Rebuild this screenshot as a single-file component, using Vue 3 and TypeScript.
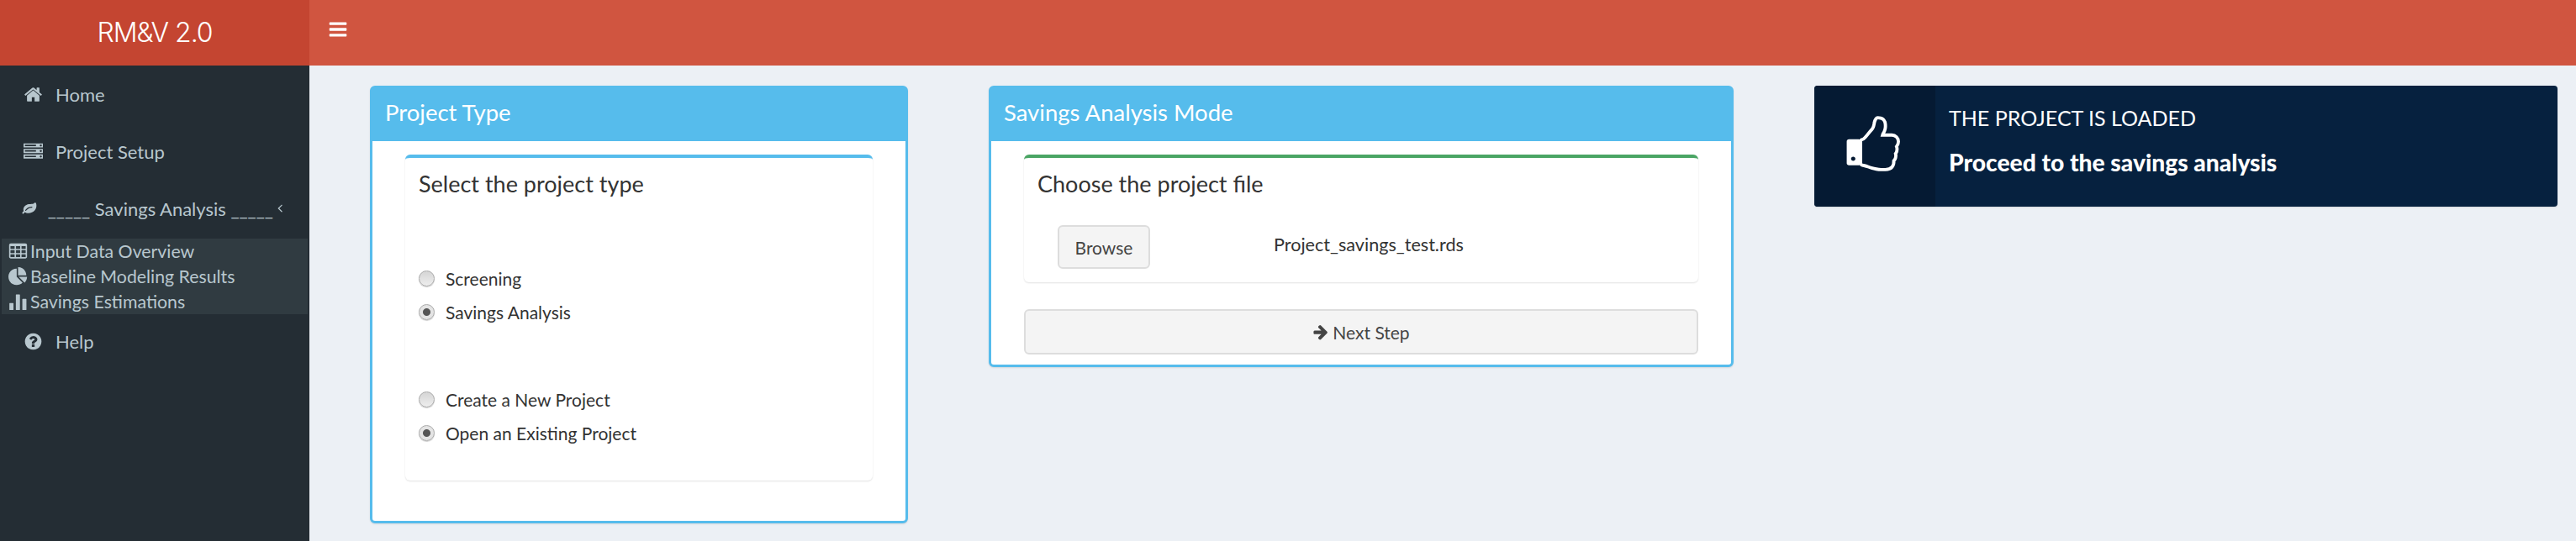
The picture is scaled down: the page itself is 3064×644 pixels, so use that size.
<script setup lang="ts">
const paths: Record<string, string> = {
  bars: 'M1664 1344v128q0 26-19 45t-45 19h-1408q-26 0-45-19t-19-45v-128q0-26 19-45t45-19h1408q26 0 45 19t19 45zm0-512v128q0 26-19 45t-45 19h-1408q-26 0-45-19t-19-45v-128q0-26 19-45t45-19h1408q26 0 45 19t19 45zm0-512v128q0 26-19 45t-45 19h-1408q-26 0-45-19t-19-45v-128q0-26 19-45t45-19h1408q26 0 45 19t19 45z',
  home: 'M1472 992v480q0 26-19 45t-45 19h-384v-384h-256v384h-384q-26 0-45-19t-19-45v-480q0-1 .5-3t.5-3l575-474 575 474q1 2 1 6zm223-69l-62 74q-8 9-21 11h-3q-13 0-21-7l-692-577-692 577q-12 8-24 7-13-2-21-11l-62-74q-8-10-7-23.5t11-21.5l719-599q32-26 76-26t76 26l244 204v-195q0-14 9-23t23-9h192q14 0 23 9t9 23v408l219 182q10 8 11 21.5t-7 23.5z',
  server: 'M128 1408h1024v-128h-1024v128zm0-512h1024v-128h-1024v128zm1568 448q0-40-28-68t-68-28-68 28-28 68 28 68 68 28 68-28 28-68zm-1568-960h1024v-128h-1024v128zm1568 448q0-40-28-68t-68-28-68 28-28 68 28 68 68 28 68-28 28-68zm0-512q0-40-28-68t-68-28-68 28-28 68 28 68 68 28 68-28 28-68zm96 832v384h-1792v-384h1792zm0-512v384h-1792v-384h1792zm0-512v384h-1792v-384h1792z',
  leaf: 'M1280 704q0-26-19-45t-45-19q-172 0-318 49.5t-259.5 134-235.5 219.5q-19 21-19 45 0 26 19 45t45 19q24 0 45-19 27-24 74-71t67-66q137-124 268.5-176t313.5-52q26 0 45-19t19-45zm512-198q0 95-20 193-46 224-184.5 383t-357.5 268q-214 108-438 108-148 0-286-47-15-5-88-42t-96-37q-16 0-39.5 32t-45 70-52.5 70-60 32q-30 0-51-11t-31-24-27-42q-2-4-6-11t-5.5-10-3-9.5-1.5-13.5q0-35 31-73.5t68-65.5 68-56 31-48q0-4-14-38t-16-44q-9-51-9-104 0-115 43.5-220t119-184.5 170.5-139 204-95.5q55-18 145-25.5t179.5-9 178.5-6 163.5-24 113.5-56.5l29.5-29.5 29.5-28 27-20 36.5-16 43.5-4.5q39 0 70.5 46t47.5 112 24 124 8 96z',
  angle: 'M1203 544q0 13-10 23l-393 393 393 393q10 10 10 23t-10 23l-50 50q-10 10-23 10t-23-10l-466-466q-10-10-10-23t10-23l466-466q10-10 23-10t23 10l50 50q10 10 10 23z',
  help: 'M1024 1376v-192q0-14-9-23t-23-9h-192q-14 0-23 9t-9 23v192q0 14 9 23t23 9h192q14 0 23-9t9-23zm256-672q0-88-55.5-163t-138.5-116-170-41q-243 0-371 213-15 24 8 42l132 100q7 6 19 6 16 0 25-12 53-68 86-92 34-24 86-24 48 0 85.5 26t37.5 59q0 38-20 61t-68 45q-63 28-115.5 86.5t-52.5 125.5v36q0 14 9 23t23 9h192q14 0 23-9t9-23q0-19 21.5-49.5t54.5-49.5q32-18 49-28.5t46-35 44.5-48 28-60.5 12.5-81zm384 192q0 209-103 385.5t-279.5 279.5-385.5 103-385.5-103-279.5-279.5-103-385.5 103-385.5 279.5-279.5 385.5-103 385.5 103 279.5 279.5 103 385.5z',
  table: 'M576 1376v-192q0-14-9-23t-23-9h-320q-14 0-23 9t-9 23v192q0 14 9 23t23 9h320q14 0 23-9t9-23zm0-384v-192q0-14-9-23t-23-9h-320q-14 0-23 9t-9 23v192q0 14 9 23t23 9h320q14 0 23-9t9-23zm512 384v-192q0-14-9-23t-23-9h-320q-14 0-23 9t-9 23v192q0 14 9 23t23 9h320q14 0 23-9t9-23zm-512-768v-192q0-14-9-23t-23-9h-320q-14 0-23 9t-9 23v192q0 14 9 23t23 9h320q14 0 23-9t9-23zm512 384v-192q0-14-9-23t-23-9h-320q-14 0-23 9t-9 23v192q0 14 9 23t23 9h320q14 0 23-9t9-23zm512 384v-192q0-14-9-23t-23-9h-320q-14 0-23 9t-9 23v192q0 14 9 23t23 9h320q14 0 23-9t9-23zm-512-768v-192q0-14-9-23t-23-9h-320q-14 0-23 9t-9 23v192q0 14 9 23t23 9h320q14 0 23-9t9-23zm512 384v-192q0-14-9-23t-23-9h-320q-14 0-23 9t-9 23v192q0 14 9 23t23 9h320q14 0 23-9t9-23zm0-384v-192q0-14-9-23t-23-9h-320q-14 0-23 9t-9 23v192q0 14 9 23t23 9h320q14 0 23-9t9-23zm128-320v1088q0 66-47 113t-113 47h-1344q-66 0-113-47t-47-113v-1088q0-66 47-113t113-47h1344q66 0 113 47t47 113z',
  pie: 'M768 890l546 546q-106 108-247.5 168t-298.5 60q-209 0-385.5-103t-279.5-279.5-103-385.5 103-385.5 279.5-279.5 385.5-103v762zm187 6h773q0 157-60 298.5t-168 247.5zm709-128h-768v-768q209 0 385.5 103t279.5 279.5 103 385.5z',
  stats: 'M130 1000h300q40 0 40 40v560q0 40-40 40h-300q-40 0-40-40v-560q0-40 40-40zm600-800h300q40 0 40 40v1360q0 40-40 40h-300q-40 0-40-40v-1360q0-40 40-40zm600 400h300q40 0 40 40v960q0 40-40 40h-300q-40 0-40-40v-960q0-40 40-40z',
  arrow: 'M1600 960q0 54-37 91l-651 651q-39 37-91 37-51 0-90-37l-75-75q-38-38-38-91t38-91l293-293h-704q-52 0-84.5-37.5t-32.5-90.5v-128q0-53 32.5-90.5t84.5-37.5h704l-293-294q-38-36-38-90t38-90l75-75q38-38 90-38 53 0 91 38l651 651q37 35 37 90z',
}

const mainMenu = [
  { label: 'Home', icon: 'home' },
  { label: 'Project Setup', icon: 'server' },
]

const subMenu = [
  { label: 'Input Data Overview', icon: 'table' },
  { label: 'Baseline Modeling Results', icon: 'pie' },
  { label: 'Savings Estimations', icon: 'stats' },
]

const typeOptions = [
  { label: 'Screening', checked: false },
  { label: 'Savings Analysis', checked: true },
]

const projectOptions = [
  { label: 'Create a New Project', checked: false },
  { label: 'Open an Existing Project', checked: true },
]
</script>

<template>
  <div class="page">
    <aside class="sidebar">
      <div class="logo">RM&amp;V 2.0</div>
      <a v-for="item in mainMenu" :key="item.label" class="menu-item">
        <svg class="menu-icon" viewBox="0 0 1792 1792"><path :d="paths[item.icon]" fill-rule="evenodd" /></svg>
        <span>{{ item.label }}</span>
      </a>
      <a class="menu-item">
        <svg class="menu-icon leaf" viewBox="0 0 1792 1792"><path :d="paths.leaf" fill-rule="evenodd" /></svg>
        <span class="savings-label">_____ Savings Analysis _____</span>
        <svg class="angle" viewBox="0 0 1792 1792"><path :d="paths.angle" /></svg>
      </a>
      <div class="tree">
        <a v-for="item in subMenu" :key="item.label" class="tree-item">
          <svg class="tree-icon" viewBox="0 0 1792 1792"><path :d="paths[item.icon]" fill-rule="evenodd" /></svg>
          <span>{{ item.label }}</span>
        </a>
      </div>
      <a class="menu-item help">
        <svg class="menu-icon" viewBox="0 0 1792 1792"><path :d="paths.help" fill-rule="evenodd" /></svg>
        <span>Help</span>
      </a>
    </aside>

    <div class="main">
      <header class="navbar">
        <svg class="toggle" viewBox="0 0 1792 1792"><path :d="paths.bars" /></svg>
      </header>

      <section class="content">
        <div class="box project-box">
          <h3 class="box-header">Project Type</h3>
          <div class="box-body">
            <div class="inner type-inner">
              <h4 class="inner-title">Select the project type</h4>
              <div class="radio-group first-group">
                <label v-for="opt in typeOptions" :key="opt.label" class="radio">
                  <input type="radio" name="type" :checked="opt.checked" />
                  <span>{{ opt.label }}</span>
                </label>
              </div>
              <div class="radio-group second-group">
                <label v-for="opt in projectOptions" :key="opt.label" class="radio">
                  <input type="radio" name="project" :checked="opt.checked" />
                  <span>{{ opt.label }}</span>
                </label>
              </div>
            </div>
          </div>
        </div>

        <div class="box mode-box">
          <h3 class="box-header">Savings Analysis Mode</h3>
          <div class="box-body">
            <div class="inner file-inner">
              <h4 class="inner-title">Choose the project file</h4>
              <div class="file-row">
                <button class="btn browse">Browse</button>
                <span class="file-name">Project_savings_test.rds</span>
              </div>
            </div>
            <button class="btn next">
              <svg class="next-icon" viewBox="0 0 1792 1792"><path :d="paths.arrow" /></svg>
              Next Step
            </button>
          </div>
        </div>

        <div class="info-box">
          <span class="info-icon">
            <svg class="thumb" viewBox="0 0 1792 1792">
              <path fill="#fff" fill-rule="evenodd" d="M320 1344q0-26-19-45t-45-19q-27 0-45.5 19t-18.5 45q0 27 18.5 45.5t45.5 18.5q26 0 45-18.5t19-45.5zm160-512v640q0 26-19 45t-45 19h-288q-26 0-45-19t-19-45v-640q0-26 19-45t45-19h288q26 0 45 19t19 45z" />
              <rect x="400" y="780" width="120" height="740" fill="#fff" />
              <path transform="translate(-70 0)" fill="none" stroke="#fff" stroke-width="96" d="M1664 832q0 86-55 149 15 44 15 76 3 76-43 137 17 56 0 117-15 57-54 94 9 112-49 181-64 76-197 78h-129q-66 0-144-15.5t-121.5-29-120.5-39.5q-123-43-158-44-26-1-45-19.5t-19-44.5v-641q0-25 18-43.5t43-20.5q24-2 76-59t101-121q68-87 101-120 18-18 31-48t17.5-48.5 13.5-60.5q7-39 12.5-61t19.5-52 34-50q19-19 45-19 46 0 82.5 10.5t60 26 40 40.5 24 45 12 50 5 45 .5 39q0 38-9.5 76t-19 60-27.5 56q-3 6-10 18t-11 22-8 24h277q78 0 135 57t57 135z" />
            </svg>
          </span>
          <div class="info-text">
            <span class="info-title">THE PROJECT IS LOADED</span>
            <span class="info-value">Proceed to the savings analysis</span>
          </div>
        </div>
      </section>
    </div>
  </div>
</template>

<style>
html,
body {
  margin: 0;
  overflow: hidden;
  background: #ecf0f5;
}
</style>

<style scoped>
.page {
  display: flex;
  height: 644px;
  font-family: Lato, "Noto Sans", sans-serif;
  color: #333;
}

.sidebar {
  width: 368px;
  flex-shrink: 0;
  background: #242d34;
  color: #b8c7ce;
}

.logo {
  height: 78px;
  background: #c44531;
  color: #fff;
  font-family: Inter, Roboto, sans-serif;
  font-weight: 300;
  font-size: 32px;
  letter-spacing: -1px;
  line-height: 78px;
  text-align: center;
}

.menu-item {
  display: flex;
  align-items: center;
  height: 68px;
  padding-left: 28px;
  font-size: 22px;
}

.menu-item.help {
  height: 64px;
}

.menu-icon {
  width: 23px;
  height: 23px;
  margin-right: 15px;
  fill: #b8c7ce;
}

.leaf {
  transform: scale(1.25);
}

.savings-label {
  white-space: pre;
}

.angle {
  width: 27px;
  height: 27px;
  margin: 0 27px 2px auto;
  fill: #b8c7ce;
}

.tree {
  margin: 2px 2px 0;
  height: 90px;
  background: #303b41;
}

.tree-item {
  display: flex;
  align-items: center;
  gap: 3px;
  height: 30px;
  padding-left: 8px;
  font-size: 21.3px;
}

.tree-icon {
  width: 23px;
  height: 23px;
  fill: #b8c7ce;
}

.main {
  flex: 1;
  display: flex;
  flex-direction: column;
  min-width: 0;
}

.navbar {
  display: flex;
  align-items: center;
  height: 78px;
  padding: 0 0 8px 22px;
  box-sizing: border-box;
  background: #d05540;
}

.toggle {
  width: 24px;
  height: 24px;
  fill: #fff;
}

.content {
  display: grid;
  grid-template-columns: 640px 886px 884px;
  column-gap: 96px;
  align-items: start;
  padding: 24px 0 0 72px;
}

.box {
  box-sizing: border-box;
  border: 3px solid #56bcec;
  border-radius: 6px;
  background: #fff;
  box-shadow: 0 1px 2px rgba(0, 0, 0, 0.1);
}

.project-box {
  height: 521px;
}

.mode-box {
  height: 335px;
}

.box-header {
  box-sizing: border-box;
  height: 63px;
  margin: 0;
  padding-left: 15px;
  background: #56bcec;
  color: #fff;
  font-size: 27.5px;
  font-weight: 400;
  line-height: 58px;
}

.box-body {
  padding: 16px 39px 0;
}

.inner {
  box-sizing: border-box;
  border-top: 4px solid #56bcec;
  border-radius: 6px;
  background: #fff;
  box-shadow: 0 1px 2px rgba(0, 0, 0, 0.12);
  padding: 0 16px;
}

.type-inner {
  height: 388px;
}

.file-inner {
  height: 152px;
  border-top-color: #4aa564;
}

.inner-title {
  margin: 0;
  padding-top: 13px;
  font-size: 27px;
  font-weight: 400;
  line-height: 36px;
}

.radio-group {
  display: flex;
  flex-direction: column;
  gap: 18px;
}

.first-group {
  padding-top: 83px;
}

.second-group {
  padding-top: 82px;
}

.radio {
  display: flex;
  align-items: center;
  gap: 13px;
  height: 22px;
  font-size: 21px;
}

.radio input {
  appearance: none;
  width: 19px;
  height: 19px;
  margin: 0;
  border: 1px solid #aaa;
  border-radius: 50%;
  background: linear-gradient(#d5d5d5, #eee);
  box-shadow: 0 1px 1px rgba(0, 0, 0, 0.2);
}

.radio input:checked {
  background: radial-gradient(circle, #555 0 4px, #e4e4e4 5px);
}

.btn {
  box-sizing: border-box;
  border: 2px solid #ddd;
  border-radius: 6px;
  background: #f4f4f4;
  color: #444;
  font-family: inherit;
  font-size: 21px;
}

.file-row {
  display: flex;
  padding: 31px 0 0 24px;
}

.browse {
  width: 110px;
  height: 52px;
}

.file-name {
  margin: 10px 0 0 147px;
  font-size: 21.6px;
}

.next {
  display: flex;
  align-items: center;
  justify-content: center;
  gap: 4px;
  width: 100%;
  height: 54px;
  margin-top: 32px;
}

.next-icon {
  width: 20px;
  height: 20px;
  fill: #444;
}

.info-box {
  display: flex;
  height: 144px;
  border-radius: 4px;
  background: #06213f;
  color: #fff;
  box-shadow: 0 1px 2px rgba(0, 0, 0, 0.1);
}

.info-icon {
  display: flex;
  align-items: center;
  justify-content: center;
  width: 144px;
  border-radius: 4px 0 0 4px;
  background: #051a33;
}

.thumb {
  width: 72px;
  height: 72px;
  margin-bottom: 6px;
}

.info-text {
  display: flex;
  flex-direction: column;
  padding: 22px 16px 0;
}

.info-title {
  font-size: 25px;
  line-height: 32px;
}

.info-value {
  margin-top: 21px;
  font-size: 28.2px;
  font-weight: 900;
  line-height: 32px;
}
</style>
